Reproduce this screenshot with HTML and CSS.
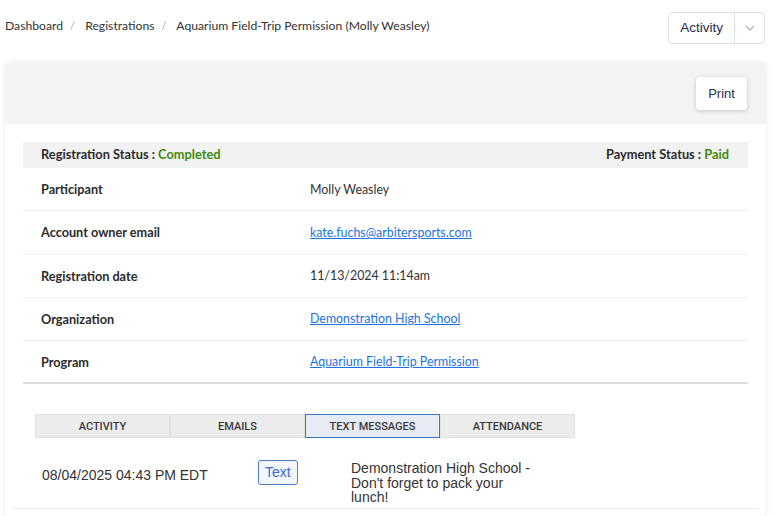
FILE: index.html
```html
<!DOCTYPE html>
<html>
<head>
<meta charset="utf-8">
<link rel="stylesheet" href="styles.css">
</head>
<body>
<div class="topbar">
  <nav class="crumbs">
    <span class="crumb">Dashboard</span><span class="sep">/</span>
    <span class="crumb">Registrations</span><span class="sep">/</span>
    <span class="crumb">Aquarium Field-Trip Permission (Molly Weasley)</span>
  </nav>
  <div class="btn-group">
    <button class="btn-main">Activity</button>
    <button class="btn-caret"><svg width="10" height="6" viewBox="0 0 10 6"><path d="M1 1l4 4 4-4" fill="none" stroke="#b5b8bd" stroke-width="1.4"/></svg></button>
  </div>
</div>
<div class="card">
  <div class="card-head">
    <button class="print">Print</button>
  </div>
  <div class="card-body">
    <div class="status">
      <span>Registration Status : <span class="ok">Completed</span></span>
      <span>Payment Status : <span class="ok">Paid</span></span>
    </div>
    <div class="row"><div class="label">Participant</div><div class="value">Molly Weasley</div></div>
    <div class="row"><div class="label">Account owner email</div><div class="value"><a href="#">kate.fuchs@arbitersports.com</a></div></div>
    <div class="row"><div class="label">Registration date</div><div class="value">11/13/2024 11:14am</div></div>
    <div class="row"><div class="label">Organization</div><div class="value"><a href="#">Demonstration High School</a></div></div>
    <div class="row last"><div class="label">Program</div><div class="value"><a href="#">Aquarium Field-Trip Permission</a></div></div>
    <div class="tabs">
      <div class="tab">ACTIVITY</div>
      <div class="tab">EMAILS</div>
      <div class="tab active">TEXT MESSAGES</div>
      <div class="tab">ATTENDANCE</div>
    </div>
    <div class="msg">
      <div class="msg-date">08/04/2025 04:43 PM EDT</div>
      <div class="msg-type"><span class="badge">Text</span></div>
      <div class="msg-text">Demonstration High School - Don't forget to pack your lunch!</div>
    </div>
  </div>
</div>
</body>
</html>
```
FILE: styles.css
```css
* { box-sizing: border-box; }
body {
  margin: 0;
  background: #fff;
  font-family: "Lato", "Liberation Sans", sans-serif;
  color: #333;
  overflow: hidden;
}
.topbar {
  display: flex;
  justify-content: space-between;
  align-items: center;
  padding: 12px 10px 0 5px;
  box-sizing: content-box;
  height: 31px;
}
.crumbs {
  font-size: 12.2px;
  color: #333;
  align-self: flex-start;
  padding-top: 6px;
}
.sep {
  color: #aaa;
  margin: 0 7px;
  font-size: 11px;
}
.btn-group {
  display: flex;
  height: 32px;
  border: 1px solid #dcdfe3;
  border-radius: 4px;
  background: #fff;
}
.btn-main {
  border: 0;
  background: none;
  font-family: "Liberation Sans", Arial, sans-serif;
  font-size: 13.5px;
  color: #1f2d4a;
  padding: 0 11px 0 11px;
  border-right: 1px solid #dcdfe3;
}
.btn-caret {
  border: 0;
  background: none;
  width: 29px;
  display: flex;
  align-items: center;
  justify-content: center;
  padding: 0;
}
.card {
  margin: 19px 9px 0 5px;
  border-radius: 6px;
  box-shadow: 0 0 6px rgba(0,0,0,0.08);
  background: #fff;
  padding-bottom: 8px;
}
.card-head {
  background: #f3f3f3;
  height: 62px;
  border-radius: 6px 6px 0 0;
  display: flex;
  justify-content: flex-end;
  align-items: center;
  padding-right: 19px;
  padding-top: 1px;
}
.print {
  border: 0;
  background: #fff;
  border-radius: 4px;
  box-shadow: 0 1px 4px rgba(0,0,0,0.2);
  font-family: "Liberation Sans", Arial, sans-serif;
  font-size: 13px;
  color: #1f2d4a;
  height: 33px;
  width: 51px;
}
.card-body {
  padding: 18px 18px 0 18px;
}
.status {
  background: #f2f2f2;
  height: 26px;
  display: flex;
  justify-content: space-between;
  align-items: center;
  padding: 0 19px 2px 18px;
  font-size: 12.8px;
  font-weight: 700;
  color: #2b2b2b;
}
.ok { color: #3f8a0e; }
.row {
  display: grid;
  grid-template-columns: 287px 1fr;
  height: 43.25px;
  align-items: center;
  border-bottom: 1px solid #eee;
}
.row.last { border-bottom: 2px solid #dcdcdc; }
.label {
  padding-left: 18px;
  font-weight: 700;
  font-size: 12.7px;
  color: #2b2b2b;
}
.value { color: #333; font-size: 12.4px; }
.value a { color: #1c74e0; }
.tabs {
  display: flex;
  margin: 30px 0 0 12px;
}
.tab {
  width: 135px;
  height: 24px;
  background: #ececec;
  border: 1px solid #e0e0e0;
  font-family: "Roboto", "Liberation Sans", sans-serif;
  font-weight: 500;
  font-size: 11px;
  color: #3a3a3a;
  display: flex;
  align-items: center;
  justify-content: center;
}
.tab.active {
  background: #e7ecf4;
  border: 1px solid #3d72c9;
}
.msg {
  display: flex;
  align-items: flex-start;
  margin: 0 -11px;
  padding: 22px 0 3px 30px;
  border-bottom: 1px solid #eee;
  font-family: "Liberation Sans", Arial, sans-serif;
  font-size: 14px;
  color: #333;
}
.msg-date { width: 216px; padding-top: 7px; }
.msg-type { width: 93px; }
.badge {
  display: inline-block;
  border: 1px solid #4a7bd0;
  border-radius: 3px;
  background: #f2f6fd;
  color: #3a6bcf;
  padding: 3px 6px;
  line-height: 17px;
}
.msg-text { width: 186px; line-height: 14.5px; padding-top: 1px; }
```
